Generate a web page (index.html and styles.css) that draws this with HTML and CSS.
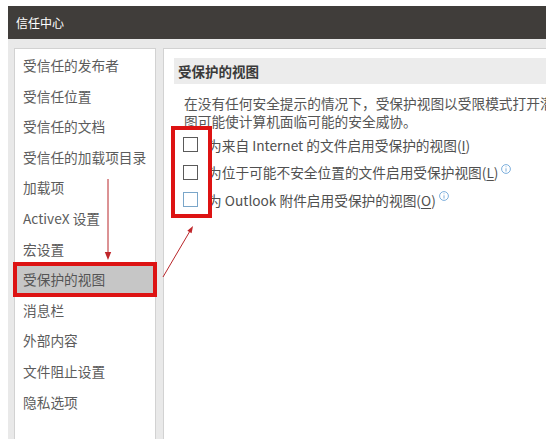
FILE: index.html
```html
<!DOCTYPE html>
<html lang="zh-CN">
<head>
<meta charset="utf-8">
<title>信任中心</title>
<link rel="stylesheet" href="styles.css">
</head>
<body>
<div class="window">
  <div class="titlebar">信任中心</div>
  <div class="main">
    <ul class="nav">
      <li>受信任的发布者</li>
      <li>受信任位置</li>
      <li>受信任的文档</li>
      <li>受信任的加载项目录</li>
      <li>加载项</li>
      <li>ActiveX 设置</li>
      <li>宏设置</li>
      <li class="selected">受保护的视图</li>
      <li>消息栏</li>
      <li>外部内容</li>
      <li>文件阻止设置</li>
      <li>隐私选项</li>
    </ul>
    <div class="content">
      <div class="section-head">受保护的视图</div>
      <div class="desc">
        <div class="line">在没有任何安全提示的情况下，受保护视图以受限模式打开潜在危险文件。在没有受保护视</div>
        <div class="line">图可能使计算机面临可能的安全威协。</div>
      </div>
      <div class="options">
        <label class="opt"><span class="box"></span><span class="txt">为来自 Internet 的文件启用受保护的视图(<u>I</u>)</span></label>
        <label class="opt"><span class="box"></span><span class="txt">为位于可能不安全位置的文件启用受保护视图(<u>L</u>)</span><svg class="info" viewBox="0 0 10 10"><circle cx="5" cy="5" r="4.4"/><path d="M5 4.3V7.6M5 2.4V3.2"/></svg></label>
        <label class="opt"><span class="box focus"></span><span class="txt">为 Outlook 附件启用受保护的视图(<u>O</u>)</span><svg class="info" viewBox="0 0 10 10"><circle cx="5" cy="5" r="4.4"/><path d="M5 4.3V7.6M5 2.4V3.2"/></svg></label>
      </div>
    </div>
  </div>
</div>
<div class="mark-box"></div>
<svg class="arrows" viewBox="0 0 554 447" width="554" height="447">
  <line x1="108" y1="179" x2="108" y2="253"/>
  <polygon points="104.8,252 111.2,252 108,260"/>
  <line x1="163" y1="277" x2="190" y2="231"/>
  <polygon points="193,226 191.6,233.3 187.3,230.8"/>
</svg>
</body>
</html>
```
FILE: styles.css
```css
html, body {
  margin: 0;
  padding: 0;
  background: #ffffff;
}
body {
  font-family: "Noto Sans CJK SC", "Noto Sans", sans-serif;
  position: relative;
  width: 554px;
  height: 447px;
  overflow: hidden;
}
.window {
  margin: 6px 0 0 8px;
  width: 538px;
  height: 433px;
  display: flex;
  flex-direction: column;
}
.titlebar {
  height: 33px;
  line-height: 33px;
  background: #403d3a;
  color: #ffffff;
  font-size: 12px;
  padding-left: 8px;
  flex: none;
}
.main {
  flex: 1;
  background: #e9e9e9;
  display: flex;
  padding: 9px 0 0 6px;
  gap: 7px;
  min-height: 0;
}
.nav {
  list-style: none;
  margin: 0;
  padding: 1px 0 0 0;
  width: 140px;
  background: #ffffff;
  border: 1px solid #d2d2d2;
  border-bottom: none;
  flex: none;
}
.nav li {
  height: 30.6px;
  line-height: 30.6px;
  padding-left: 8px;
  font-size: 13.7px;
  color: #5c5c5c;
  white-space: nowrap;
}
.nav li.selected {
  background: #c6c6c6;
  color: #555555;
  outline: 4px solid #dd1313;
  outline-offset: -2px;
}
.content {
  flex: 1;
  background: #ffffff;
  border-left: 1px solid #d2d2d2;
  border-top: 1px solid #d2d2d2;
  padding: 9px 0 0 10px;
  overflow: hidden;
  min-width: 0;
}
.section-head {
  height: 26px;
  line-height: 26px;
  background: #ececec;
  padding-left: 4px;
  font-size: 13.5px;
  font-weight: bold;
  color: #3a3a3a;
}
.desc {
  margin-top: 10px;
  padding-left: 10px;
  font-size: 13.7px;
  line-height: 18px;
  color: #555555;
}
.desc .line {
  white-space: nowrap;
}
.options {
  margin-top: 1px;
  padding-left: 9px;
  display: flex;
  flex-direction: column;
}
.opt {
  height: 27.5px;
  display: flex;
  align-items: center;
  font-size: 13.7px;
  color: #505050;
  white-space: nowrap;
}
.opt u {
  text-decoration: underline;
  text-underline-offset: 2px;
}
.box {
  width: 13px;
  height: 13px;
  border: 1px solid #5a5a5a;
  margin-right: 10px;
  flex: none;
  background: #ffffff;
}
.box.focus {
  border-color: #7aa6c9;
}
.info {
  width: 10px;
  height: 10px;
  margin-left: 3px;
  margin-bottom: 7px;
  fill: none;
  stroke: #6ea6d8;
  stroke-width: 0.9;
  flex: none;
}
.mark-box {
  position: absolute;
  left: 171px;
  top: 126px;
  width: 41px;
  height: 92px;
  box-sizing: border-box;
  border: 4px solid #dd1313;
}
.arrows {
  position: absolute;
  left: 0;
  top: 0;
  pointer-events: none;
}
.arrows line {
  stroke: #b8262a;
  stroke-width: 1;
}
.arrows polygon {
  fill: #c0262a;
}
```
